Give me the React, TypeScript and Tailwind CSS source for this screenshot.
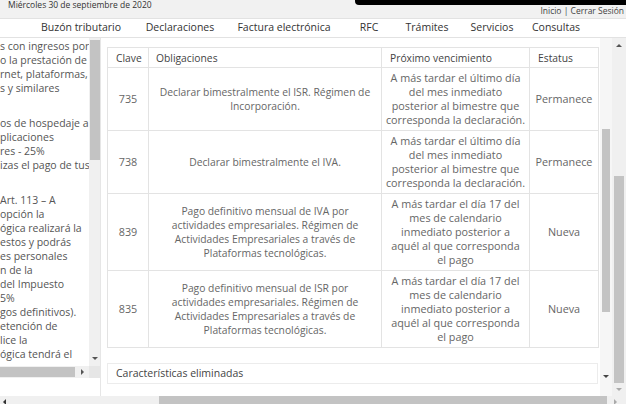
import React from 'react';

// label + distance from the previous item's centre
const navItems: [string, string][] = [
  ['Buzón tributario', 'ml-0'],
  ['Declaraciones', 'ml-[99px]'],
  ['Factura electrónica', 'ml-[104px]'],
  ['RFC', 'ml-[85px]'],
  ['Trámites', 'ml-[58px]'],
  ['Servicios', 'ml-[65px]'],
  ['Consultas', 'ml-[64px]'],
];

const sideParagraphs = [
  ['s con ingresos por', 'o la prestación de', 'rnet, plataformas,', 's y similares'],
  ['os de hospedaje a', 'plicaciones', 'res - 25%', 'izas el pago de tus'],
  [
    'Art. 113 – A',
    'opción la',
    'ógica realizará la',
    'estos y podrás',
    'es personales',
    'n de la',
    'del Impuesto',
    '5%',
    'gos definitivos).',
    'etención de',
    'lice la',
    'ógica tendrá el',
  ],
];

type Row = {
  clave: string;
  obligacion: string[];
  vencimiento: string[];
  estatus: string;
};

const rows: Row[] = [
  {
    clave: '735',
    obligacion: ['Declarar bimestralmente el ISR. Régimen de', 'Incorporación.'],
    vencimiento: ['A más tardar el último día', 'del mes inmediato', 'posterior al bimestre que', 'corresponda la declaración.'],
    estatus: 'Permanece',
  },
  {
    clave: '738',
    obligacion: ['Declarar bimestralmente el IVA.'],
    vencimiento: ['A más tardar el último día', 'del mes inmediato', 'posterior al bimestre que', 'corresponda la declaración.'],
    estatus: 'Permanece',
  },
  {
    clave: '839',
    obligacion: [
      'Pago definitivo mensual de IVA por',
      'actividades empresariales. Régimen de',
      'Actividades Empresariales a través de',
      'Plataformas tecnológicas.',
    ],
    vencimiento: ['A más tardar el día 17 del', 'mes de calendario', 'inmediato posterior a', 'aquél al que corresponda', 'el pago'],
    estatus: 'Nueva',
  },
  {
    clave: '835',
    obligacion: [
      'Pago definitivo mensual de ISR por',
      'actividades empresariales. Régimen de',
      'Actividades Empresariales a través de',
      'Plataformas tecnológicas.',
    ],
    vencimiento: ['A más tardar el día 17 del', 'mes de calendario', 'inmediato posterior a', 'aquél al que corresponda', 'el pago'],
    estatus: 'Nueva',
  },
];

const Lines = ({ lines }: { lines: string[] }) => (
  <>
    {lines.map((l, i) => (
      <div key={i} className="whitespace-nowrap">
        {l}
      </div>
    ))}
  </>
);

const Arrow = ({ dir, className }: { dir: 'up' | 'down' | 'left' | 'right'; className?: string }) => {
  const shapes = {
    up: 'border-x-[3px] border-b-[3px] border-x-transparent',
    down: 'border-x-[3px] border-t-[3px] border-x-transparent',
    left: 'border-y-[3px] border-r-[3px] border-y-transparent',
    right: 'border-y-[3px] border-l-[3px] border-y-transparent',
  };
  return <div className={`h-0 w-0 ${shapes[dir]} ${className ?? ''}`} />;
};

export default function App() {
  return (
    <div className="relative h-[404px] w-[626px] overflow-hidden bg-white font-['Open_Sans',sans-serif] text-[#555]">
      {/* top strip */}
      <div className="relative flex h-[18px] justify-between bg-[#f1f1f1]">
        <div className="pl-2 text-[8.5px] leading-[9px] text-[#333]">Miércoles 30 de septiembre de 2020</div>
        <div className="absolute right-0 top-0 h-[5px] w-[271px] rounded-bl-[4px] bg-black" />
        <div className="pr-[2px] pt-[5px] text-[8.5px] leading-[11px] text-[#444]">Inicio | Cerrar Sesión</div>
      </div>

      {/* main navigation: zero-width slots keep each label centred on its point */}
      <div className="flex h-[20px] items-center border-y border-[#e2e2e2] bg-white pl-[81px] text-[10.5px] text-[#333]">
        {navItems.map(([label, ml]) => (
          <span key={label} className={`${ml} flex w-0 justify-center whitespace-nowrap`}>
            {label}
          </span>
        ))}
      </div>

      <div className="flex h-[358px]">
        {/* side panel */}
        <div className="flex w-[100px] flex-col">
          <div className="flex h-[328px]">
            <div className="w-[89px] overflow-hidden pt-[1px] text-[10.5px] leading-[14px] text-[#555]">
              {sideParagraphs.map((p, i) => (
                <div key={i} className={i > 0 ? 'mt-[21px]' : ''}>
                  <Lines lines={p} />
                </div>
              ))}
            </div>
            <div className="flex w-[11px] flex-col items-center bg-[#f0f0f0]">
              <div className="mt-[2px] h-[120px] w-[10px] bg-[#c3c3c3]" />
              <div className="flex-1" />
              <Arrow dir="down" className="mb-[6px] border-t-[#555]" />
            </div>
          </div>
          <div className="flex h-[12px] items-center bg-[#f0f0f0]">
            <div className="h-[10px] w-[75px] bg-[#c3c3c3]" />
            <Arrow dir="right" className="ml-[6px] border-l-[#555]" />
            <div className="ml-auto h-[12px] w-[11px] bg-[#e6e6e6]" />
          </div>
        </div>

        {/* obligations panel */}
        <div className="flex w-[512px] border-l border-[#e6e6e6]">
          <div className="w-[500px] pl-[6px] pt-[9px]">
            <table className="w-[491px] table-fixed border-collapse text-[10.8px] leading-[14px]">
              <colgroup>
                <col className="w-[41px]" />
                <col className="w-[233px]" />
                <col className="w-[148px]" />
                <col className="w-[69px]" />
              </colgroup>
              <thead>
                <tr className="h-[20px] text-left text-[10.3px] text-[#444]">
                  <th className="border border-[#e3e3e3] px-[8px] font-normal">Clave</th>
                  <th className="border border-[#e3e3e3] px-[7px] font-normal">Obligaciones</th>
                  <th className="border border-[#e3e3e3] px-[8px] font-normal">Próximo vencimiento</th>
                  <th className="border border-[#e3e3e3] px-[8px] font-normal">Estatus</th>
                </tr>
              </thead>
              <tbody className="text-[#666]">
                {rows.map((r) => (
                  <tr key={r.clave}>
                    <td className="border border-[#e3e3e3] py-[3px] text-center align-middle">{r.clave}</td>
                    <td className="border border-[#e3e3e3] py-[3px] text-center align-middle text-[10.3px]">
                      <Lines lines={r.obligacion} />
                    </td>
                    <td className="border border-[#e3e3e3] py-[3px] text-center align-middle">
                      <Lines lines={r.vencimiento} />
                    </td>
                    <td className="border border-[#e3e3e3] py-[3px] text-center align-middle">{r.estatus}</td>
                  </tr>
                ))}
              </tbody>
            </table>

            <div className="mt-[15px] flex h-[21px] w-[491px] items-center border border-[#ececec] pl-[8px] text-[10.5px] text-[#444]">
              Características eliminadas
            </div>
          </div>

          {/* inner scrollbar */}
          <div className="flex w-[12px] flex-col items-center bg-[#f6f6f6]">
            <div className="mt-[91px] h-[183px] w-[8px] bg-[#c3c3c3]" />
            <div className="flex-1" />
            <Arrow dir="down" className="mb-[18px] border-t-[#444]" />
          </div>
        </div>

        {/* page scrollbar */}
        <div className="flex w-[14px] flex-col items-center bg-[#f0f0f0]">
          <Arrow dir="up" className="mt-[6px] border-b-[#555]" />
          <div className="mt-[129px] h-[207px] w-[10px] bg-[#c3c3c3]" />
          <Arrow dir="down" className="mt-[5px] border-t-[#aaa]" />
        </div>
      </div>

      {/* page horizontal scrollbar */}
      <div className="flex h-[12px] items-start bg-[#f0f0f0]">
        <Arrow dir="left" className="ml-[3px] mt-[3px] border-r-[#333]" />
        <div className="ml-[153px] h-[10px] w-[448px] bg-[#c3c3c3]" />
        <Arrow dir="right" className="ml-[7px] mt-[3px] border-l-[#aaa]" />
      </div>
    </div>
  );
}
